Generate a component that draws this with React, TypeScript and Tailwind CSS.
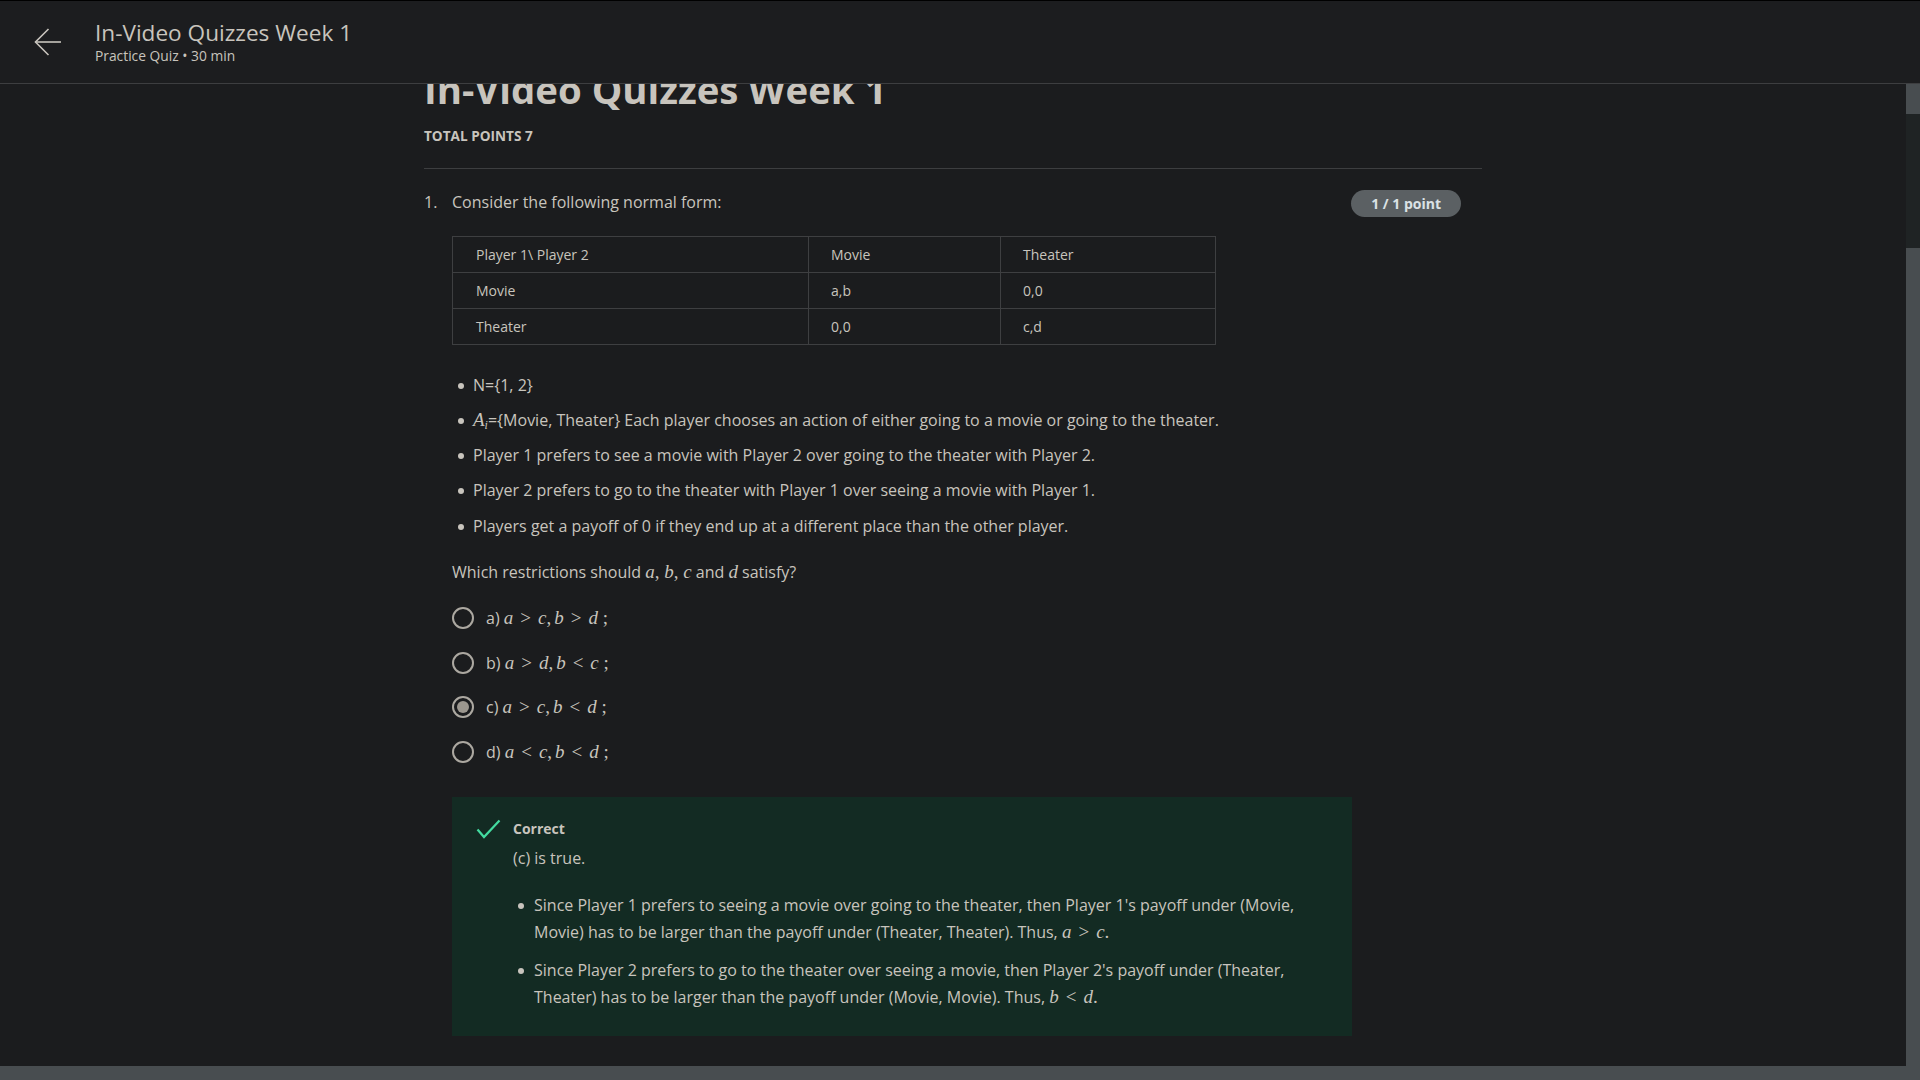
import { ReactNode } from 'react'

const font = { fontFamily: '"Open Sans", "Liberation Sans", sans-serif' }

function M({ children }: { children: ReactNode }) {
  return <span className="font-['Liberation_Serif',serif] text-[19px] leading-none">{children}</span>
}

function V({ children }: { children: ReactNode }) {
  return <i className="font-['Liberation_Serif',serif]">{children}</i>
}

function Rel({ children }: { children: ReactNode }) {
  return <span className="mx-[7px]">{children}</span>
}

function Dot({ top = 'pt-[10px]', left = 'pl-[6px]' }: { top?: string; left?: string }) {
  return (
    <span className={`flex w-[21px] shrink-0 justify-start ${left} ${top}`}>
      <span className="block h-[6px] w-[6px] rounded-full bg-[#c8c4bd]" />
    </span>
  )
}

const bullets: ReactNode[] = [
  'N={1, 2}',
  <>
    <M>
      <V>A</V>
      <sub className="text-[12px]">
        <V>i</V>
      </sub>
    </M>
    ={'{'}Movie, Theater{'}'} Each player chooses an action of either going to a movie or going to the theater.
  </>,
  'Player 1 prefers to see a movie with Player 2 over going to the theater with Player 2.',
  'Player 2 prefers to go to the theater with Player 1 over seeing a movie with Player 1.',
  'Players get a payoff of 0 if they end up at a different place than the other player.',
]

const rows = [
  ['Player 1\\ Player 2', 'Movie', 'Theater'],
  ['Movie', 'a,b', '0,0'],
  ['Theater', '0,0', 'c,d'],
]

type Opt = { label: string; a: string; r1: string; c: string; b: string; r2: string; d: string; checked?: boolean }

const options: Opt[] = [
  { label: 'a)', a: 'a', r1: '>', c: 'c', b: 'b', r2: '>', d: 'd' },
  { label: 'b)', a: 'a', r1: '>', c: 'd', b: 'b', r2: '<', d: 'c' },
  { label: 'c)', a: 'a', r1: '>', c: 'c', b: 'b', r2: '<', d: 'd', checked: true },
  { label: 'd)', a: 'a', r1: '<', c: 'c', b: 'b', r2: '<', d: 'd' },
]

function Radio({ checked }: { checked?: boolean }) {
  return (
    <span className="flex h-[22px] w-[22px] shrink-0 items-center justify-center rounded-full border-2 border-[#aca8a1]">
      {checked && <span className="block h-[12px] w-[12px] rounded-full bg-[#9c978f]" />}
    </span>
  )
}

export default function App() {
  return (
    <div style={font} className="flex h-[1080px] w-[1920px] flex-col overflow-hidden bg-[#1b1c1e] text-[#c8c4bd]">
      {/* top bar */}
      <header className="flex h-[84px] shrink-0 items-center border-t border-b border-t-black border-b-[#3d3e40] bg-[#1c1d1f]">
        <svg className="ml-[34px]" width="28" height="28" viewBox="0 0 28 28" fill="none" stroke="#c8c4bd" strokeWidth="1.6">
          <path d="M27 14H1.5" />
          <path d="M14.5 1L1.5 14l13 13" />
        </svg>
        <div className="ml-[33px] flex flex-col pt-[2px]">
          <h1 className="text-[22.6px] leading-[26px] text-[#c8c4bd]">In-Video Quizzes Week 1</h1>
          <p className="text-[13.8px] leading-[20px] text-[#c8c4bd]">Practice Quiz • 30 min</p>
        </div>
      </header>

      <div className="flex min-h-0 flex-1">
        <main className="min-w-0 flex-1 overflow-hidden">
          <div className="mx-auto w-[1058px]">
            <h2 className="mt-[-18px] text-[38.4px] font-bold leading-[46px] text-[#c8c4bd]">In-Video Quizzes Week 1</h2>
            <div className="mt-[14px] border-b border-[#3d3e40] pb-[21.5px] text-[13.6px] font-bold leading-[20px]">
              TOTAL POINTS 7
            </div>

            <div className="flex pt-[21px] pr-[21px]">
              <span className="w-[28px] shrink-0 text-[16px] leading-[24px]">1.</span>
              <div className="flex-1">
                <div className="flex items-start justify-between">
                  <p className="text-[16px] leading-[24px]">Consider the following normal form:</p>
                  <span className="flex h-[27px] items-center rounded-full bg-[#5b6063] px-[20px] text-[14px] font-bold text-[#dbe2e5]">
                    1 / 1 point
                  </span>
                </div>

                <table className="mt-[19px] w-[764px] border-collapse text-[14px]">
                  <tbody>
                    {rows.map((r, i) => (
                      <tr key={i} className="h-[36px]">
                        <td className="w-[356px] border border-[#3e3f41] pl-[23px]">{r[0]}</td>
                        <td className="w-[192px] border border-[#3e3f41] pl-[22px]">{r[1]}</td>
                        <td className="border border-[#3e3f41] pl-[22px]">{r[2]}</td>
                      </tr>
                    ))}
                  </tbody>
                </table>

                <ul className="mt-[28px] flex flex-col gap-[11.3px] text-[16px] leading-[24px]">
                  {bullets.map((b, i) => (
                    <li key={i} className="flex">
                      <Dot />
                      <span>{b}</span>
                    </li>
                  ))}
                </ul>

                <p className="mt-[22.5px] text-[16px] leading-[24px]">
                  Which restrictions should{' '}
                  <M>
                    <V>a</V>, <V>b</V>, <V>c</V>
                  </M>{' '}
                  and{' '}
                  <M>
                    <V>d</V>
                  </M>{' '}
                  satisfy?
                </p>

                <div className="mt-[22px] flex flex-col gap-[20.5px]">
                  {options.map((o) => (
                    <label key={o.label} className="flex h-[24px] items-center">
                      <Radio checked={o.checked} />
                      <span className="ml-[12px] text-[16px] leading-[24px]">
                        {o.label}{' '}
                        <M>
                          <V>{o.a}</V>
                          <Rel>{o.r1}</Rel>
                          <V>{o.c}</V>,<span className="ml-[3px]" />
                          <V>{o.b}</V>
                          <Rel>{o.r2}</Rel>
                          <V>{o.d}</V> ;
                        </M>
                      </span>
                    </label>
                  ))}
                </div>

                <div className="mt-[33px] w-[900px] bg-[#132b23] pt-[22px] pr-[24px] pb-[25px] pl-[24px]">
                  <div className="flex items-center">
                    <svg width="25" height="20" viewBox="0 0 25 20" fill="none" stroke="#43dba0" strokeWidth="2.2">
                      <path d="M1.5 10.5l6.5 7.5L23.5 1.5" />
                    </svg>
                    <span className="ml-[12px] text-[14px] font-bold leading-[20px]">Correct</span>
                  </div>
                  <div className="pl-[37px]">
                    <p className="mt-[7px] text-[16px] leading-[24px]">(c) is true.</p>
                    <ul className="mt-[22px] flex flex-col gap-[11px] text-[16px] leading-[27px]">
                      <li className="flex">
                        <Dot top="pt-[11px]" left="pl-[5px]" />
                        <span>
                          Since Player 1 prefers to seeing a movie over going to the theater, then Player 1's payoff under (Movie,
                          Movie) has to be larger than the payoff under (Theater, Theater). Thus,{' '}
                          <M>
                            <V>a</V>
                            <Rel>&gt;</Rel>
                            <V>c</V>.
                          </M>
                        </span>
                      </li>
                      <li className="flex">
                        <Dot top="pt-[11px]" left="pl-[5px]" />
                        <span>
                          Since Player 2 prefers to go to the theater over seeing a movie, then Player 2's payoff under (Theater,
                          Theater) has to be larger than the payoff under (Movie, Movie). Thus,{' '}
                          <M>
                            <V>b</V>
                            <Rel>&lt;</Rel>
                            <V>d</V>.
                          </M>
                        </span>
                      </li>
                    </ul>
                  </div>
                </div>
              </div>
            </div>
          </div>
        </main>

        {/* vertical scrollbar */}
        <div className="flex w-[14px] shrink-0 flex-col bg-[#1f2324]">
          <div className="h-[30px] bg-[#484d50]" />
          <div className="h-[134px]" />
          <div className="flex-1 bg-[#484d50]" />
        </div>
      </div>

      {/* horizontal scrollbar */}
      <div className="h-[14px] shrink-0 bg-[#484d50]" />
    </div>
  )
}
